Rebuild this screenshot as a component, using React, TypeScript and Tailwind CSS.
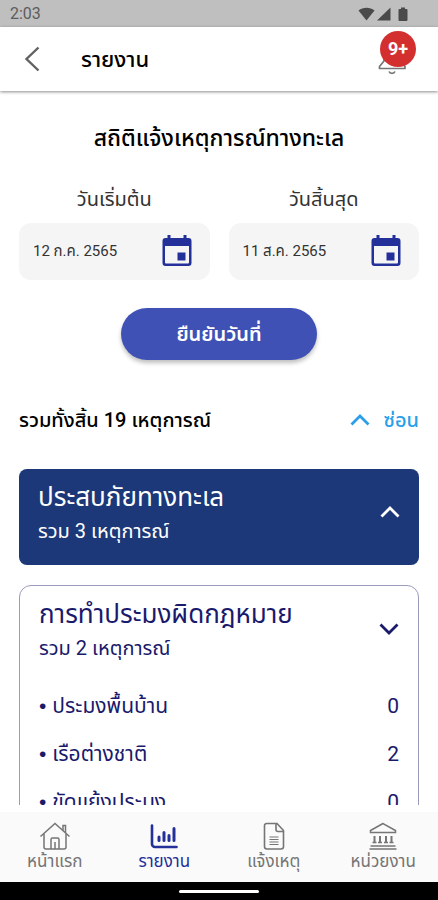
import { useState } from "react";

const reports = [
  { name: "ประมงพื้นบ้าน", count: 0 },
  { name: "เรือต่างชาติ", count: 2 },
  { name: "ขัดแย้งประมง", count: 0 },
];

function StatusBar() {
  return (
    <div className="flex h-[27px] shrink-0 items-center justify-between bg-[#bfbfbf] pl-[10px] pr-[30px] text-[#5c5c5c]">
      <span className="font-[Roboto] text-base">2:03</span>
      <svg width="50" height="16" viewBox="0 0 50 16" fill="#4a4a4a">
        <path d="M0.500 4.500C5 0.800 12 0.800 16.500 4.500L8.500 14.500Z" />
        <path d="M32.500 1.500V14.500H19Z" />
        <path d="M43 1.500h4v1.500h1.500a1 1 0 0 1 1 1v10a1 1 0 0 1-1 1h-7a1 1 0 0 1-1-1v-10a1 1 0 0 1 1-1H43z" />
      </svg>
    </div>
  );
}

function Header() {
  return (
    <header className="z-10 flex h-16 shrink-0 items-center justify-between bg-white pl-6 pr-[22px] shadow-[0_1px_3px_rgba(0,0,0,0.45)]">
      <div className="flex items-center gap-10">
        <button aria-label="ย้อนกลับ">
          <svg width="17" height="28" viewBox="0 0 17 28" fill="none" stroke="#616161" strokeWidth="2.400">
            <path d="M14.500 2.500L2.500 14L14.500 25.500" />
          </svg>
        </button>
        <h1 className="text-[22px] font-medium">รายงาน</h1>
      </div>
      <button aria-label="การแจ้งเตือน" className="relative mt-1 flex h-11 w-[38px] items-end self-start">
        <svg width="30" height="32" viewBox="0 0 30 32" fill="none" stroke="#757575" strokeWidth="1.700" strokeLinejoin="round">
          <path d="M14 2.500C8 2.500 6 7 6 12V18L1.500 23.500V25.500H27V23.500L22 18V12C22 7 20 2.500 14 2.500Z" />
          <path d="M11 28.500C12 31 16 31 17 28.500" />
        </svg>
        <span className="absolute right-0 top-0 flex size-9 items-center justify-center rounded-full bg-[#d32f2f] text-lg font-bold text-white">
          9+
        </span>
      </button>
    </header>
  );
}

function DateField({ id, label, initial }: { id: string; label: string; initial: string }) {
  const [value, setValue] = useState(initial);

  return (
    <div className="min-w-0 flex-1">
      <label htmlFor={id} className="block text-center text-xl leading-6 text-[#333]">
        {label}
      </label>
      <div className="mt-3 flex h-[57px] items-center justify-between rounded-xl bg-[#f5f5f5] pl-[14px] pr-4">
        <input
          id={id}
          type="text"
          value={value}
          onChange={(e) => setValue(e.target.value)}
          className="w-full min-w-0 bg-transparent text-[15px] text-[#333] outline-none"
        />
        <button aria-label={label} className="shrink-0">
          <svg width="34" height="36" viewBox="0 0 34 36" fill="#24309a">
            <path
              fillRule="evenodd"
              d="M7.500 1h3v3h13V1h3v3h2a3 3 0 0 1 3 3v22a3 3 0 0 1-3 3h-23a3 3 0 0 1-3-3V7a3 3 0 0 1 3-3h2zM5 12v16.500a1 1 0 0 0 1 1h22a1 1 0 0 0 1-1V12z"
            />
            <path d="M17.500 18.500h8v8h-8z" />
          </svg>
        </button>
      </div>
    </div>
  );
}

function Chevron({ up = false }: { up?: boolean }) {
  return (
    <svg width="20" height="14" viewBox="0 0 20 14" fill="none" stroke="currentColor" strokeWidth="2.800">
      <path d={up ? "M1.500 11.500L10 3L18.500 11.500" : "M1.500 2.500L10 11L18.500 2.500"} />
    </svg>
  );
}

function BottomNav() {
  return (
    <nav className="mt-[7px] grid h-[70px] shrink-0 grid-cols-4 bg-[#fafafa] text-center text-[17px] leading-5 text-[#757575]">
      <a href="#home" className="flex flex-col items-center pt-[9px]">
        <svg width="32" height="30" viewBox="0 0 32 30" fill="none" stroke="currentColor" strokeWidth="1.500">
          <path d="M1.500 15.500L16 2.500L30.500 15.500" />
          <path d="M24 9.500V4.500H26.500V12" />
          <path d="M5 13V26a2 2 0 0 0 2 2H25a2 2 0 0 0 2-2V13" />
          <path d="M12 28V18.500a1.500 1.500 0 0 1 1.500-1.500h5a1.500 1.500 0 0 1 1.500 1.500V28M16 21V28" />
        </svg>
        หน้าแรก
      </a>
      <a href="#report" className="flex flex-col items-center pt-[9px] text-[#24309a]">
        <svg width="30" height="30" viewBox="0 0 30 30" fill="none" stroke="currentColor" strokeLinecap="round">
          <path strokeWidth="2.600" d="M3 4.500V23a3 3 0 0 0 3 3H27.500" />
          <path strokeWidth="3" d="M10 16V19.500M15 11.500V19.500M20 14.500V19.500M25 7.500V19.500" />
        </svg>
        รายงาน
      </a>
      <a href="#notify" className="flex flex-col items-center pt-[9px]">
        <svg width="24" height="30" viewBox="0 0 24 30" fill="none" stroke="currentColor" strokeWidth="1.600">
          <path d="M4.500 2.500H15L21.500 9.500V25.500a2.500 2.500 0 0 1-2.500 2.500H5a2.500 2.500 0 0 1-2.500-2.500V4.500a2 2 0 0 1 2-2Z" />
          <path d="M14 2.500V8.500a2 2 0 0 0 2 2H21.500" />
          <path strokeWidth="1.200" d="M7.500 16H16.500M7.500 18.500H16.500M7.500 21H16.500M7.500 23.500H16.500" />
        </svg>
        แจ้งเหตุ
      </a>
      <a href="#agency" className="flex flex-col items-center pt-[9px]">
        <svg width="30" height="30" viewBox="0 0 30 30" fill="none" stroke="currentColor" strokeWidth="1.500">
          <path d="M15 2.500L2.500 9.500V11.500H27.500V9.500Z" />
          <path d="M6.500 15V21.500M12 15V21.500M18 15V21.500M23.500 15V21.500" strokeWidth="2" />
          <path d="M4.500 21.500H8.500M10 21.500H14M16 21.500H20M21.500 21.500H25.500M2.500 25H27.500M1.500 28H28.500" strokeWidth="1.400" />
        </svg>
        หน่วยงาน
      </a>
    </nav>
  );
}

export default function App() {
  return (
    <div className="flex h-screen flex-col bg-white font-['Roboto','Noto_Sans_Thai','Noto_Sans',sans-serif] text-black">
      <StatusBar />
      <Header />
      <main className="min-h-0 flex-1 overflow-hidden px-[19px] pt-8">
        <h2 className="text-center text-[23px] font-medium leading-8">สถิติแจ้งเหตุการณ์ทางทะเล</h2>
        <div className="mt-8 flex gap-[19px]">
          <DateField id="start" label="วันเริ่มต้น" initial="12 ก.ค. 2565" />
          <DateField id="end" label="วันสิ้นสุด" initial="11 ส.ค. 2565" />
        </div>
        <button className="mx-auto mt-7 flex h-[52px] w-[196px] items-center justify-center rounded-full bg-[#3f51b5] text-xl font-semibold text-white shadow-[0_3px_4px_rgba(0,0,0,0.25)]">
          ยืนยันวันที่
        </button>

        <div className="mt-[46px] flex h-7 items-center justify-between text-xl">
          <p className="font-medium">รวมทั้งสิ้น 19 เหตุการณ์</p>
          <button className="flex items-center gap-[14px] font-medium text-[#2a9fe8]">
            <Chevron up />
            ซ่อน
          </button>
        </div>

        <section className="mt-[35px] h-24 rounded-lg bg-[#1c3879] px-[19px] pt-3 text-white">
          <div className="flex items-center justify-between">
            <div>
              <h3 className="text-[26px] leading-8">ประสบภัยทางทะเล</h3>
              <p className="text-xl leading-9">รวม 3 เหตุการณ์</p>
            </div>
            <button aria-label="แสดง" className="pb-1.5">
              <Chevron up />
            </button>
          </div>
        </section>

        <section className="mt-5 rounded-xl border border-[#9a9abb] px-[19px] pb-6 pt-3 text-[#1a1a6c]">
          <div className="flex items-center justify-between">
            <div>
              <h3 className="text-[26px] leading-8">การทำประมงผิดกฎหมาย</h3>
              <p className="text-xl leading-9">รวม 2 เหตุการณ์</p>
            </div>
            <button aria-label="ซ่อน" className="pb-1.5">
              <Chevron />
            </button>
          </div>
          <ul className="mt-[26px] flex flex-col gap-5 text-[21px] leading-7">
            {reports.map((item) => (
              <li key={item.name} className="flex justify-between">
                <span className="flex gap-1.5">
                  <span className="font-['Liberation_Sans']">•</span>
                  {item.name}
                </span>
                <span>{item.count}</span>
              </li>
            ))}
          </ul>
        </section>
      </main>
      <BottomNav />
      <div className="flex h-[18px] shrink-0 items-center justify-center bg-black">
        <div className="h-[3px] w-20 rounded-full bg-white" />
      </div>
    </div>
  );
}
